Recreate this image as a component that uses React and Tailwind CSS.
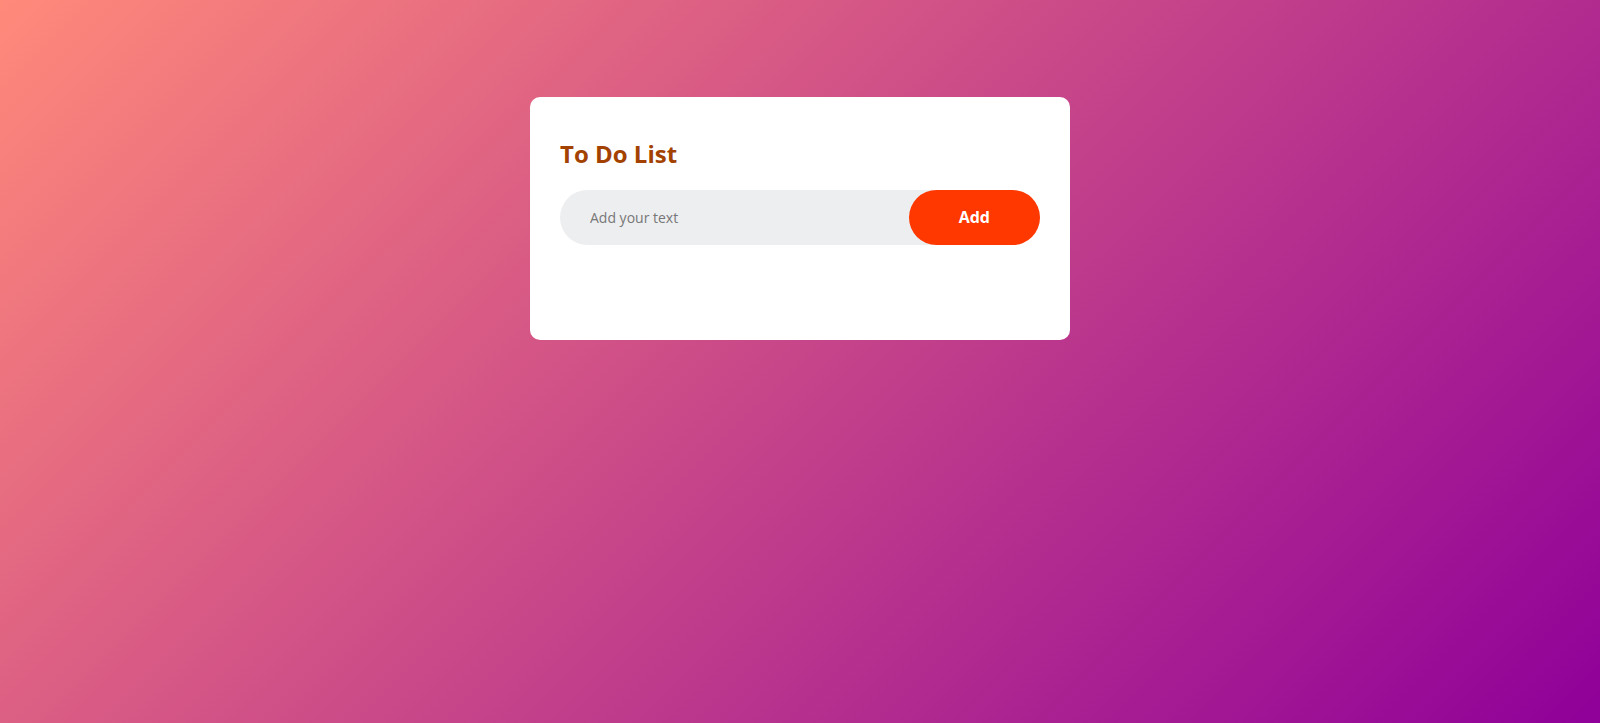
export default function App() {
  const font = { fontFamily: '"Comic Sans MS", "Open Sans", "Noto Sans", sans-serif' };
  return (
    <div
      className="w-full min-h-[723px] bg-[linear-gradient(135deg,#ff8a7a,#8e0099)] pt-[97px]"
      style={font}
    >
      <div className="mx-auto w-[540px] bg-white rounded-[10px] px-[30px] pt-10 pb-[70px]">
        <h2 className="text-[24px] font-bold leading-[33px] text-[#a34200] mb-5">To Do List</h2>
        <div className="flex items-center bg-[#edeef0] rounded-[30px] pl-5 mb-[25px]">
          <input
            type="text"
            placeholder="Add your text"
            className="flex-1 min-w-0 bg-transparent outline-none border-none p-[10px] text-[14px] text-[#555] placeholder:text-[#777]"
          />
          <button className="bg-[#ff3800] text-white text-[16px] font-bold leading-[23px] py-4 px-[50px] rounded-[40px]">
            Add
          </button>
        </div>
      </div>
    </div>
  );
}
